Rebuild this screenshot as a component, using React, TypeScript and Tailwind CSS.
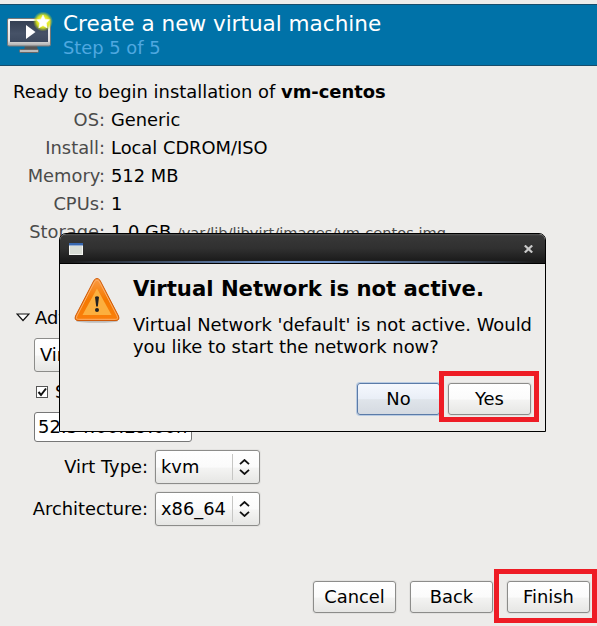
import React from "react";

const FONT = "font-['DejaVu_Sans',sans-serif]";

function Button({ children, focused = false }: { children: React.ReactNode; focused?: boolean }) {
  return (
    <button
      className={
        "flex h-8 w-[83px] shrink-0 items-center justify-center rounded-[3px] border text-[17.9px] leading-none whitespace-nowrap " +
        (focused
          ? "border-[#5b7ba8] bg-[linear-gradient(#f5f8fe,#e9eef6_50%,#dfe4ea_52%,#d5dae1)] shadow-[0_0_0_1px_#b9cbe2]"
          : "border-[#8c8c8a] bg-[linear-gradient(#ffffff,#fbfbfb_50%,#f3f3f2_54%,#e6e6e4)] shadow-[0_0_0_1px_#e2e1df]")
      }
    >
      {children}
    </button>
  );
}

function Row({ label, children }: { label: string; children: React.ReactNode }) {
  return (
    <div className="flex h-7 items-center text-[17.85px]">
      <div className="w-[105px] shrink-0 text-right text-[#4b4b4a]">{label}</div>
      <div className="ml-[6px] whitespace-nowrap">{children}</div>
    </div>
  );
}

function Combo({ label, value }: { label: string; value: string }) {
  return (
    <div className="flex h-[34px] items-center text-[17.85px]">
      <div className="w-[148px] shrink-0 text-right">{label}</div>
      <div className="ml-[7px] flex h-[34px] w-[105px] items-center rounded-[3px] border border-[#8c8c8a] bg-[linear-gradient(#ffffff,#fbfbfb_50%,#f4f4f3_54%,#e6e6e4)] pl-[5px] shadow-[0_0_0_1px_#e4e3e1]">
        <span className="w-[71px]">{value}</span>
        <span className="h-[26px] w-px bg-[#c6c6c4]" />
        <svg className="ml-[6px]" width="11" height="16" viewBox="0 0 11 16" fill="none" stroke="#111" strokeWidth="1.8">
          <path d="M1 5.2 L5.5 1 L10 5.2 M1 10.8 L5.5 15 L10 10.8" />
        </svg>
      </div>
    </div>
  );
}

function MachineIcon() {
  return (
    <svg className="shrink-0" width="48" height="44" viewBox="0 0 48 44">
      <defs>
        <linearGradient id="frame" x1="0" y1="0" x2="0" y2="1">
          <stop offset="0" stopColor="#fafafa" />
          <stop offset="0.8" stopColor="#e0e0e0" />
          <stop offset="1" stopColor="#a9a9a9" />
        </linearGradient>
        <linearGradient id="screen" x1="0" y1="0" x2="0" y2="1">
          <stop offset="0" stopColor="#354053" />
          <stop offset="0.6" stopColor="#465267" />
          <stop offset="1" stopColor="#3d495e" />
        </linearGradient>
        <radialGradient id="glow">
          <stop offset="0.45" stopColor="#eef02a" />
          <stop offset="0.65" stopColor="#dbe61c" stopOpacity="0.9" />
          <stop offset="1" stopColor="#b4cf30" stopOpacity="0" />
        </radialGradient>
      </defs>
      <path d="M18 34h12l1 4H17z" fill="#555" />
      <rect x="12.5" y="37.5" width="19" height="3" rx="1" fill="#bbb" stroke="#666" />
      <rect x="0.5" y="6.5" width="43" height="27.5" rx="1.5" fill="url(#frame)" stroke="#777" />
      <rect x="3" y="9" width="38" height="21" fill="url(#screen)" />
      <path d="M19 13 L28.5 20 L19 27z" fill="#fff" />
      <circle cx="36" cy="9.5" r="10" fill="url(#glow)" />
      <path d="M36 3l2.1 4.2 4.4.6-3.2 3.3.9 4.8-4.2-2.3-4.2 2.3.9-4.8-3.2-3.3 4.4-.6z" fill="#fff" stroke="#fff" strokeWidth=".5" strokeLinejoin="round" />
    </svg>
  );
}

function WarningIcon() {
  return (
    <svg className="shrink-0" width="46" height="46" viewBox="0 0 46 46">
      <defs>
        <linearGradient id="warn" x1="0" y1="0" x2="0" y2="1">
          <stop offset="0" stopColor="#fb9b43" />
          <stop offset="0.5" stopColor="#f57900" />
          <stop offset="1" stopColor="#fa7f0c" />
        </linearGradient>
      </defs>
      <ellipse cx="23" cy="43" rx="21" ry="1.8" fill="#000" opacity="0.2" />
      <path d="M20 2.3Q23-1.3 26 2.3L44.5 38Q46 42.5 42 42.5H4Q0 42.5 1.5 38z" fill="url(#warn)" stroke="#cf5b0a" strokeWidth="1" />
      <path d="M20.8 3.4Q23 .5 25.2 3.4L43 37.8Q44.5 41.3 41.5 41.3H4.5Q1.5 41.3 3 37.8z" fill="none" stroke="#fcaf6b" strokeWidth="1" />
      <path d="M23 10.5L37.5 37H8.5z" fill="#fcaf3e" />
      <path d="M21 19Q23 17.5 25 19L23.8 28.5H22.2z" fill="#222" />
      <circle cx="23" cy="32" r="2" fill="#222" />
    </svg>
  );
}

function Dialog() {
  return (
    <div className="absolute left-[59px] top-[233px] h-[199px] w-[487px] overflow-hidden rounded-t-[7px] border border-black bg-[#edecea]">
      <div className="flex h-[30px] items-center justify-between border-b border-black bg-[linear-gradient(#555_0,#383838_2px,#303030_50%,#1c1c1c_90%)] pl-[9px] pr-[12px] pt-px">
        <svg width="14" height="12" viewBox="0 0 14 12">
          <rect width="14" height="12" fill="#f4f5f2" />
          <rect width="14" height="2.5" fill="#3868b0" />
          <rect x="1" y="3" width="12" height="8" fill="#d9ddd6" />
        </svg>
        <svg width="9" height="8" viewBox="0 0 9 8" stroke="#c9c9c9" strokeWidth="2.2">
          <path d="M.8.5L8.2 7.5M8.2.5L.8 7.5" />
        </svg>
      </div>
      <div className="-mt-[3px] h-[2px] bg-[linear-gradient(90deg,transparent_2%,#7297cf_45%,#7297cf_55%,transparent_98%)]" />
      <div className="flex pl-[14px] pt-[13px]">
        <div className="pt-[2px]">
          <WarningIcon />
        </div>
        <div className="ml-[13px]">
          <h2 className="text-[21.2px] font-bold leading-[26px] whitespace-nowrap">Virtual Network is not active.</h2>
          <p className="mt-[12px] text-[17.9px] leading-[22px] whitespace-nowrap">
            Virtual Network 'default' is not active. Would<br />you like to start the network now?
          </p>
        </div>
      </div>
      <div className="mt-[25px] flex gap-[8px] pl-[297px]">
        <Button focused>No</Button>
        <Button>Yes</Button>
      </div>
    </div>
  );
}

export default function App() {
  return (
    <main className={`relative flex h-[626px] w-[597px] flex-col overflow-hidden bg-[#edecea] text-black ${FONT}`}>
      <header className="mt-1 flex h-[62px] shrink-0 border-y border-[#174d6c] bg-[#0072a8] pl-[7px] pt-[7px]">
        <MachineIcon />
        <div className="-mt-px ml-2">
          <h1 className="text-[21.55px] leading-[25px] text-white">Create a new virtual machine</h1>
          <p className="text-[17.85px] leading-[24px] text-[#4fa8e0]">Step 5 of 5</p>
        </div>
      </header>
      <p className="mt-[12px] pl-[13px] text-[17.9px] leading-[27px]">
        Ready to begin installation of <b>vm-centos</b>
      </p>
      <div className="mt-px">
        <Row label="OS:">Generic</Row>
        <Row label="Install:">Local CDROM/ISO</Row>
        <Row label="Memory:">512 MB</Row>
        <Row label="CPUs:">1</Row>
        <Row label="Storage:">
          1.0 GB <span className="text-[14.6px] text-[#4b4b4a]">/var/lib/libvirt/images/vm-centos.img</span>
        </Row>
      </div>
      <div className="mt-[58px] flex h-7 items-center gap-[5px] pl-[16px] text-[17.9px]">
        <svg className="-mt-[2px]" width="14" height="9" viewBox="0 0 14 9" fill="#fff" stroke="#111" strokeWidth="1.2">
          <path d="M1 1H13L7 7.5z" />
        </svg>
        Advanced options
      </div>
      <div className="ml-[34px] mt-[6px] flex h-[34px] w-[300px] shrink-0 items-center rounded-[3px] border border-[#8c8c8a] bg-[linear-gradient(#fff,#fbfbfb_50%,#f4f4f3_54%,#e6e6e4)] pl-[5px] text-[17.9px]">
        Virtual network
      </div>
      <div className="mt-[6px] flex h-7 items-center gap-[7px] pl-[36px] text-[17.9px]">
        <svg width="12" height="12" viewBox="0 0 12 12" fill="none">
          <rect x=".5" y=".5" width="11" height="11" fill="#fff" stroke="#555" />
          <path d="M2.5 6L5 9L10 2.5" stroke="#111" strokeWidth="2" />
        </svg>
        Set a fixed MAC address
      </div>
      <div className="ml-[34px] mt-[6px] flex h-[30px] w-[158px] shrink-0 items-center rounded-[3px] border border-[#777] bg-white pl-[3px] text-[17.9px] whitespace-nowrap">
        52:54:00:29:00h
      </div>
      <div className="mt-[8px] flex flex-col gap-2">
        <Combo label="Virt Type:" value="kvm" />
        <Combo label="Architecture:" value="x86_64" />
      </div>
      <footer className="mt-[55px] flex gap-[14px] pl-[313px]">
        <Button>Cancel</Button>
        <Button>Back</Button>
        <Button>Finish</Button>
      </footer>
      <Dialog />
      <div className="absolute left-[439px] top-[371px] h-[51px] w-[100px] border-[5px] border-[#ee1c25]" />
      <div className="absolute left-[494px] top-[569px] h-[54px] w-[103px] border-[5px] border-[#ee1c25]" />
    </main>
  );
}
